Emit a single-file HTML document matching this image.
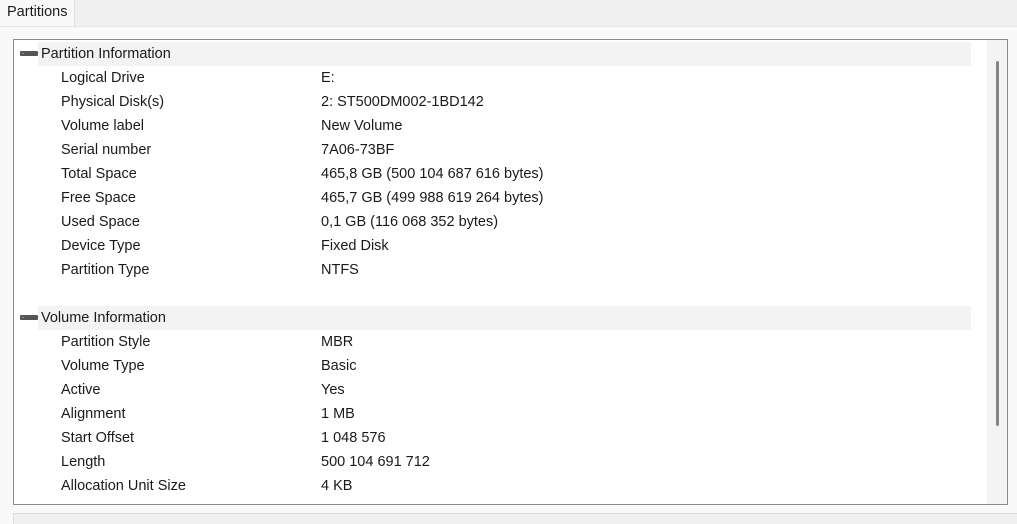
<!DOCTYPE html>
<html><head><style>
body{margin:0;width:1017px;height:523px;background:#f9f9f9;font-family:"Liberation Sans",sans-serif;font-size:14.5px;color:#1a1a1a;position:relative;overflow:hidden}
.tabstrip{position:absolute;left:0;top:0;width:1017px;height:26px;background:#f0f0f0;border-bottom:1px solid #e5e5e5}
.tab{position:absolute;left:0;top:0;width:75px;height:26px;background:#f9f9f9;border-right:1px solid #e0e0e0;line-height:24px;padding-left:7px;box-sizing:border-box}
.panel{position:absolute;left:13px;top:39px;width:995px;height:466px;border:1px solid #8a8a8a;background:#fff;box-sizing:border-box}
.sb{position:absolute;left:973px;top:0;width:20px;height:464px;background:#f3f3f3}
.thumb{position:absolute;left:982px;top:21px;width:3px;height:365px;background:#858585;border-radius:2px}
.hdr{position:absolute;left:24px;width:933px;height:24px;background:#f3f3f3}
.t{position:absolute;line-height:22px;padding-top:1px;white-space:nowrap}
.ic{position:absolute;left:6px;width:18px;height:5px;background:#555;border-radius:1px}
.ic:after{content:"";position:absolute;left:2px;top:2px;width:2px;height:1px;background:#3c3}
.bottom{position:absolute;left:13px;top:513px;width:1004px;height:10px;border-top:1px solid #ddd;border-left:1px solid #ddd;background:#f0f0f0}
</style></head><body>
<div class="tabstrip"><div class="tab">Partitions</div></div>
<div class="panel">
<div class="sb"></div><div class="thumb"></div>
<div class="hdr" style="top:2px"></div><div class="ic" style="top:11px"></div>
<div class="t" style="left:27px;top:2px">Partition Information</div>
<div class="t" style="left:47px;top:26px">Logical Drive</div><div class="t" style="left:307px;top:26px">E:</div>
<div class="t" style="left:47px;top:50px">Physical Disk(s)</div><div class="t" style="left:307px;top:50px">2: ST500DM002-1BD142</div>
<div class="t" style="left:47px;top:74px">Volume label</div><div class="t" style="left:307px;top:74px">New Volume</div>
<div class="t" style="left:47px;top:98px">Serial number</div><div class="t" style="left:307px;top:98px">7A06-73BF</div>
<div class="t" style="left:47px;top:122px">Total Space</div><div class="t" style="left:307px;top:122px">465,8 GB (500 104 687 616 bytes)</div>
<div class="t" style="left:47px;top:146px">Free Space</div><div class="t" style="left:307px;top:146px">465,7 GB (499 988 619 264 bytes)</div>
<div class="t" style="left:47px;top:170px">Used Space</div><div class="t" style="left:307px;top:170px">0,1 GB (116 068 352 bytes)</div>
<div class="t" style="left:47px;top:194px">Device Type</div><div class="t" style="left:307px;top:194px">Fixed Disk</div>
<div class="t" style="left:47px;top:218px">Partition Type</div><div class="t" style="left:307px;top:218px">NTFS</div>
<div class="hdr" style="top:266px"></div><div class="ic" style="top:275px"></div>
<div class="t" style="left:27px;top:266px">Volume Information</div>
<div class="t" style="left:47px;top:290px">Partition Style</div><div class="t" style="left:307px;top:290px">MBR</div>
<div class="t" style="left:47px;top:314px">Volume Type</div><div class="t" style="left:307px;top:314px">Basic</div>
<div class="t" style="left:47px;top:338px">Active</div><div class="t" style="left:307px;top:338px">Yes</div>
<div class="t" style="left:47px;top:362px">Alignment</div><div class="t" style="left:307px;top:362px">1 MB</div>
<div class="t" style="left:47px;top:386px">Start Offset</div><div class="t" style="left:307px;top:386px">1 048 576</div>
<div class="t" style="left:47px;top:410px">Length</div><div class="t" style="left:307px;top:410px">500 104 691 712</div>
<div class="t" style="left:47px;top:434px">Allocation Unit Size</div><div class="t" style="left:307px;top:434px">4 KB</div>
</div>
<div class="bottom"></div>
</body></html>
